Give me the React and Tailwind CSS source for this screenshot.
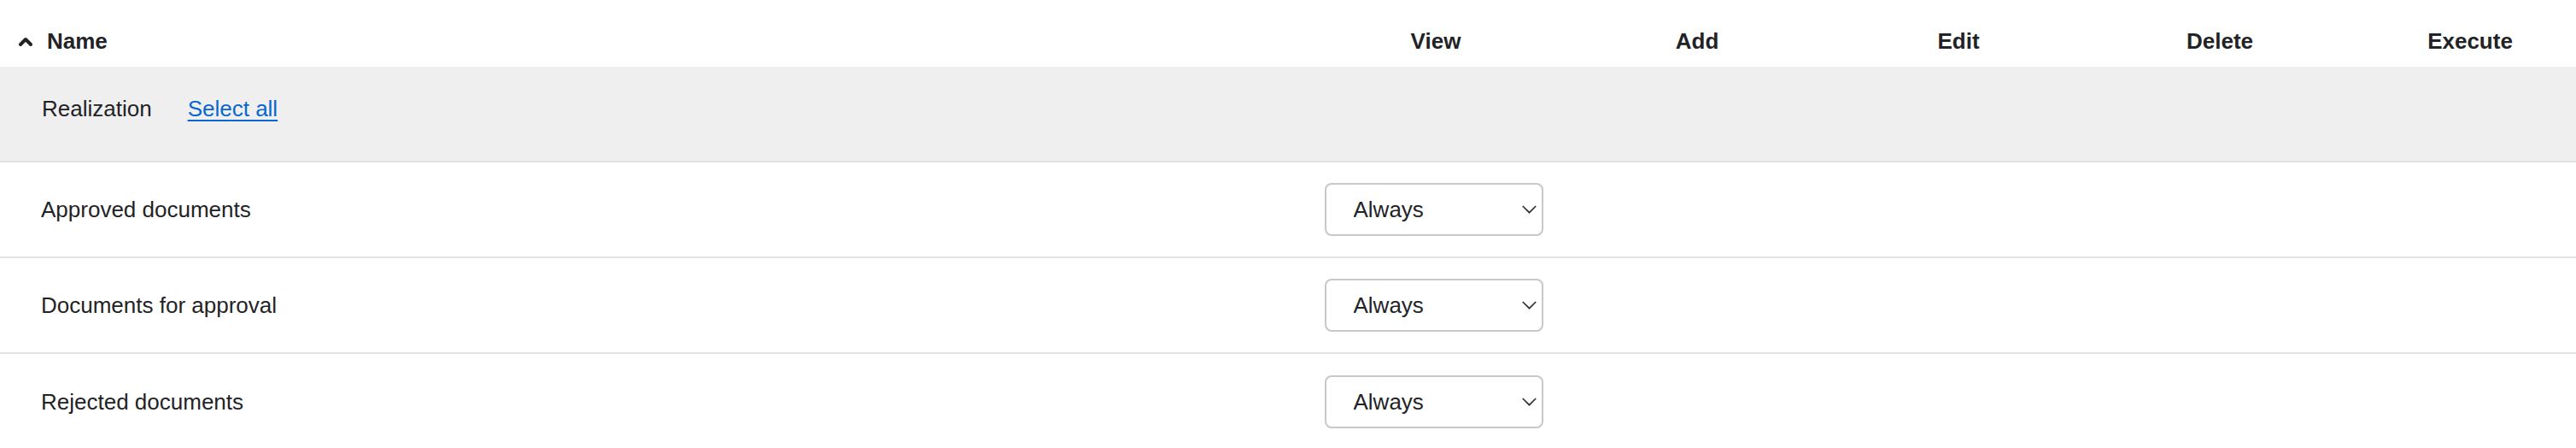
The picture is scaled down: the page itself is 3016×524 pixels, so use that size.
import React from 'react';

const font = { fontFamily: '"Liberation Sans", Arial, sans-serif' };

const rows = ['Approved documents', 'Documents for approval', 'Rejected documents'];
const cols = ['View', 'Add', 'Edit', 'Delete', 'Execute'];

const grid = 'grid grid-cols-[1528px_306px_306px_306px_306px_1fr]';

const SelectBox = () => (
  <div className="relative w-[256px] h-[62px]">
    <select
      defaultValue="always"
      className="appearance-none w-full h-full rounded-[8px] border-2 border-[#c8c8c8] bg-white pl-[32px] pr-[40px] text-[26px] text-[#222326] outline-none"
      style={font}
    >
      <option value="always">Always</option>
      <option value="never">Never</option>
    </select>
    <svg
      className="absolute right-[8px] top-[26px] w-[17px] h-[10px] pointer-events-none"
      viewBox="0 0 17 10"
      fill="none"
      stroke="#333"
      strokeWidth="1.7"
    >
      <path d="M0.8 1l7.7 7.7L16.2 1" />
    </svg>
  </div>
);

const App = () => {
  return (
    <div className="w-[3016px] h-[524px] bg-white text-[#222326] text-[26px] overflow-hidden" style={font}>
      {/* header */}
      <div className={`${grid} h-[78px] items-center pt-[18px] font-bold`}>
        <div className="flex items-center pl-[21px]">
          <svg className="w-[18px] h-[13px] mr-[16px]" viewBox="0 0 18 13" fill="none" stroke="#222326" strokeWidth="4" strokeLinecap="round" strokeLinejoin="round">
            <path d="M3 10L9 4l6 6" />
          </svg>
          <span>Name</span>
        </div>
        {cols.map((c, i) => (
          <div key={c} className={`text-center ${i === 4 ? 'pl-[16px]' : ''}`}>{c}</div>
        ))}
      </div>

      {/* group row */}
      <div className="h-[112px] bg-[#efefef] border-b-2 border-[#e2e2e2] flex items-center pl-[49px] pb-[12px]">
        <span>Realization</span>
        <a href="#" className="ml-[42px] text-[#0a66d0] underline underline-offset-[4px] decoration-2">Select all</a>
      </div>

      {rows.map((r, i) => (
        <div
          key={r}
          className={`${grid} h-[112px] items-center ${i < rows.length - 1 ? 'border-b-2 border-[#e2e2e2]' : ''}`}
        >
          <div className="pl-[48px]">{r}</div>
          <div className="flex justify-center pr-[5px]">
            <SelectBox />
          </div>
          <div />
          <div />
          <div />
          <div />
        </div>
      ))}
    </div>
  );
};

export default App;
